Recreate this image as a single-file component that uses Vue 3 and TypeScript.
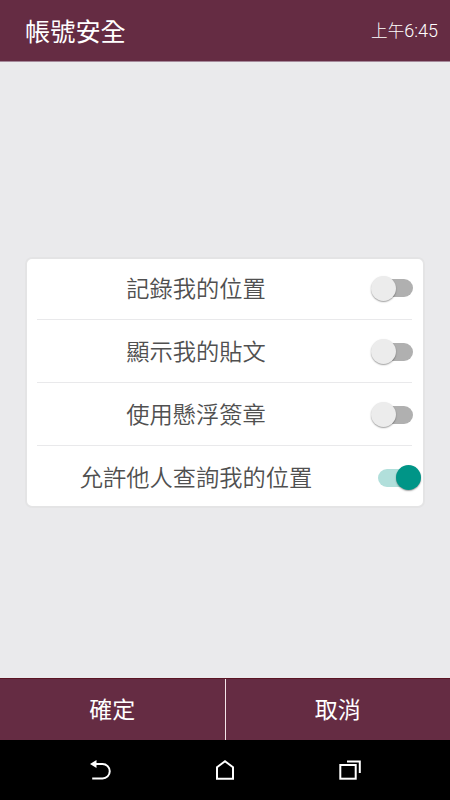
<script setup lang="ts">
import { ref } from 'vue'

interface Setting {
  label: string
  enabled: boolean
}

const settings = ref<Setting[]>([
  { label: '記錄我的位置', enabled: false },
  { label: '顯示我的貼文', enabled: false },
  { label: '使用懸浮簽章', enabled: false },
  { label: '允許他人查詢我的位置', enabled: true },
])
</script>

<template>
  <div class="screen">
    <header class="header">
      <h1 class="title">帳號安全</h1>
      <span class="time"><span class="period">上午</span>6:45</span>
    </header>

    <main class="content">
      <div class="card">
        <div v-for="item in settings" :key="item.label" class="row">
          <span class="label">{{ item.label }}</span>
          <button
            class="switch"
            :class="{ on: item.enabled }"
            role="switch"
            :aria-checked="item.enabled"
            @click="item.enabled = !item.enabled"
          >
            <span class="thumb"></span>
          </button>
        </div>
      </div>
    </main>

    <footer class="actions">
      <button class="action">確定</button>
      <button class="action">取消</button>
    </footer>

    <nav class="navbar">
      <svg class="nav-icon" viewBox="0 0 24 24">
        <path d="M7 4H14.5A7.2 7.2 0 0 1 14.5 18.5H4.2" fill="none" stroke="#fff" stroke-width="2" />
        <path d="M2 4L8.5 0V8Z" fill="#fff" />
      </svg>
      <svg class="nav-icon" viewBox="0 0 24 24">
        <path d="M4 18.7V7.3L12 1.3L20 7.3V18.7Z" fill="none" stroke="#fff" stroke-width="2" />
      </svg>
      <svg class="nav-icon" viewBox="0 0 24 24">
        <rect x="2.3" y="5" width="15.4" height="13.7" fill="none" stroke="#fff" stroke-width="2" />
        <path d="M9 1.5H21.8V13" fill="none" stroke="#fff" stroke-width="2" />
      </svg>
    </nav>
  </div>
</template>

<style>
body {
  margin: 0;
}
</style>

<style scoped>
.screen {
  display: flex;
  flex-direction: column;
  width: 450px;
  height: 800px;
  overflow: hidden;
  background: #eaeaec;
  font-family: Roboto, "Noto Sans CJK TC", sans-serif;
}

button {
  margin: 0;
  padding: 0;
  border: 0;
  font: inherit;
}

.header {
  display: flex;
  box-sizing: border-box;
  flex: none;
  align-items: center;
  justify-content: space-between;
  height: 62px;
  padding: 0 12px 0 25px;
  border-bottom: 1px solid #a5899a;
  background: #652c43;
  color: #fff;
}

.title {
  margin: 0;
  padding-top: 4px;
  font-size: 25.2px;
  font-weight: 400;
  line-height: 36px;
}

.time {
  padding-top: 1px;
  font-size: 18px;
  font-weight: 300;
  line-height: 24px;
}

.period {
  font-size: 16.6px;
}

.content {
  flex: 1;
  padding: 195px 25px 0;
}

.card {
  box-sizing: border-box;
  height: 251px;
  padding: 0 11px 0 10px;
  border: 2px solid #e4e4e5;
  border-radius: 7px;
  background: #fff;
}

.row {
  display: flex;
  box-sizing: border-box;
  align-items: center;
  height: 63px;
  padding-top: 1px;
  border-bottom: 1px solid #e9e9eb;
}

.row:first-child {
  height: 61px;
  padding-top: 0;
  padding-bottom: 2px;
}

.row:last-child {
  height: 60px;
  padding-top: 3px;
  border-bottom: 0;
}

.label {
  flex: none;
  width: 318px;
  padding-top: 1px;
  color: #505050;
  font-size: 23.25px;
  font-weight: 350;
  line-height: 34px;
  text-align: center;
  white-space: nowrap;
}

.switch {
  display: flex;
  flex: none;
  align-items: center;
  width: 37px;
  height: 18px;
  margin-left: 21px;
  border-radius: 9px;
  background: #b0b0b0;
}

.thumb {
  flex: none;
  width: 25px;
  height: 25px;
  margin-left: -5px;
  border-radius: 50%;
  background: #ececec;
  box-shadow: 0 1px 1.5px rgba(0, 0, 0, 0.38);
}

.switch.on {
  margin-left: 23px;
  background: #b1dfdb;
}

.switch.on .thumb {
  margin-left: 17.5px;
  background: #009587;
}

.actions {
  display: flex;
  flex: none;
  box-sizing: border-box;
  height: 62px;
  border-top: 1px solid #5a1524;
}

.action {
  flex: 1;
  padding-top: 2px;
  background: #652c43;
  color: #fff;
  font-size: 23px;
  line-height: 34px;
}

.action + .action {
  border-left: 1px solid #f3e5e8;
}

.navbar {
  display: flex;
  flex: none;
  box-sizing: border-box;
  justify-content: space-between;
  height: 60px;
  padding: 20px 88px 0;
  background: #000;
}

.nav-icon {
  width: 24px;
  height: 24px;
}
</style>
